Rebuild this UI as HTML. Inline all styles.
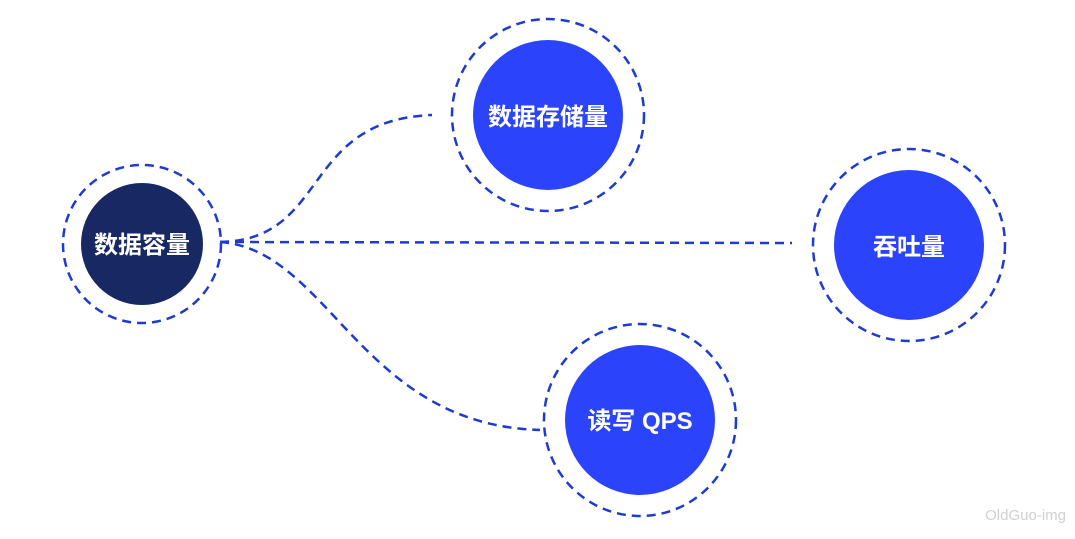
<!DOCTYPE html><html><head><meta charset="utf-8"><style>body{margin:0;background:#fff;width:1075px;height:534px;overflow:hidden}text{font-family:"Liberation Sans","Noto Sans CJK SC",sans-serif;font-weight:bold;fill:#fff}</style></head><body>
<svg width="1075" height="534" viewBox="0 0 1075 534">
<g fill="none" stroke="#1d3ccf" stroke-width="2.5" stroke-dasharray="9 6">
<circle cx="142" cy="244" r="79"/>
<circle cx="548" cy="115" r="96"/>
<circle cx="909" cy="245" r="96"/>
<circle cx="640" cy="420" r="96"/>
<path d="M220 242 C330 240 300 120 432 115"/>
<path d="M220 242 L792 243"/>
<path d="M220 242 C330 250 360 425 540 430"/>
</g>
<circle cx="142" cy="244" r="61" fill="#182863"/>
<circle cx="548" cy="115" r="75" fill="#2b44fb"/>
<circle cx="909" cy="245" r="75" fill="#2b44fb"/>
<circle cx="640" cy="420" r="75" fill="#2b44fb"/>
<text x="142" y="253" font-size="24" text-anchor="middle">数据容量</text>
<text x="548" y="125" font-size="24" text-anchor="middle">数据存储量</text>
<text x="909" y="255" font-size="24" text-anchor="middle">吞吐量</text>
<text x="640" y="429" font-size="24" text-anchor="middle">读写 QPS</text>
<text x="1066" y="520" font-size="15" text-anchor="end" style="font-weight:normal;fill:#d0d0d0">OldGuo-img</text>
</svg></body></html>
